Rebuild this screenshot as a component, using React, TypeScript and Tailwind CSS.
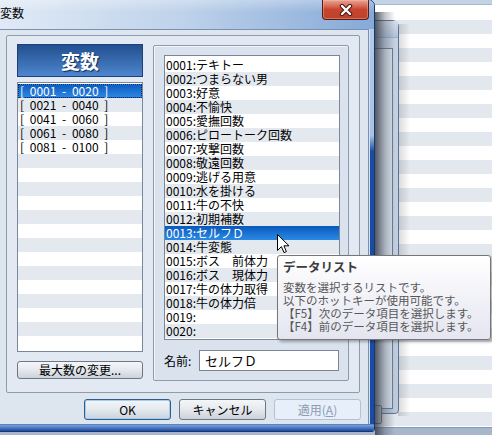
import React from "react";

// 右側リストのデータ
const vars = [
  "テキトー",
  "つまらない男",
  "好意",
  "不愉快",
  "愛撫回数",
  "ピロートーク回数",
  "攻撃回数",
  "敬遠回数",
  "逃げる用意",
  "水を掛ける",
  "牛の不快",
  "初期補数",
  "セルフＤ",
  "牛変態",
  "ボス　前体力",
  "ボス　現体力",
  "牛の体力取得",
  "牛の体力倍",
  "",
  "",
];

const ranges = ["[ 0001 - 0020 ]", "[ 0021 - 0040 ]", "[ 0041 - 0060 ]", "[ 0061 - 0080 ]", "[ 0081 - 0100 ]"];

export default function App() {
  return (
    <div className="relative w-[492px] h-[435px] overflow-hidden bg-white font-['Noto_Sans_CJK_JP',sans-serif] text-[12px] text-black">
      {/* --- 背後のアプリ (縞模様リスト) --- */}
      <div className="absolute inset-0 flex flex-col">
        <div className="h-[5px] bg-[#c3d2e4] border-b border-[#a7b9cf]" />
        <div className="flex-1 overflow-hidden flex flex-col">
          <div className="h-[15px] shrink-0 bg-white" />
          {Array.from({ length: 30 }).map((_, i) => (
            <div key={i} className={i % 2 === 0 ? "h-[14px] shrink-0 bg-[#e3e8ef]" : "h-[14px] shrink-0 bg-white"} />
          ))}
        </div>
        <div className="h-[8px] bg-[#a7b7cb] border-t border-[#8497b0]" />
      </div>

      {/* 背後のウィンドウの影 */}
      <div className="absolute left-[398px] top-[24px] w-[12px] h-[392px] bg-gradient-to-r from-black/15 to-transparent" />

      {/* --- 背後のウィンドウ --- */}
      <div className="absolute left-[300px] top-[20px] w-[99px] h-[394px] rounded-t-[7px] rounded-b-[4px] border border-[#5d7290] bg-gradient-to-b from-[#c4d2e3] to-[#bccadc]">
        <div className="h-[17px] border-b border-[#9fb0c6] bg-gradient-to-b from-[#d3deeb] to-[#b2c3d9]" />
        <div className="absolute left-0 right-[5px] top-[27px] bottom-[4px] border border-[#6b7e98] bg-[#dbe3ed]">
          <div className="absolute left-[60px] top-[356px] w-[20px] h-[19px] border border-[#777e87] rounded-[2px] bg-[#d3d9e1]" />
        </div>
      </div>

      {/* ダイアログの影 */}
      <div className="absolute left-[375px] top-[12px] w-[20px] h-[423px] bg-gradient-to-r from-[#2f3540]/80 via-[#4c5360]/35 to-transparent" />

      {/* --- 変数ダイアログ --- */}
      <div className="absolute left-[-8px] top-[-1px] w-[383px] h-[433px] flex flex-col rounded-t-[7px] rounded-b-[3px] border border-[#17386f] overflow-hidden bg-[#9fbbe1]">
        {/* タイトルバー */}
        <div className="relative h-[29px] shrink-0 bg-gradient-to-r from-[#e2ebf6] via-[#bed2ea] to-[#86a9d8]">
          <div className="absolute inset-x-0 top-0 h-[12px] bg-gradient-to-b from-white/30 to-transparent" />
          <span className="absolute left-[7px] top-[5px] text-[12px] leading-[16px] text-black">変数</span>
          <div className="absolute right-[5px] top-0 w-[47px] h-[20px] rounded-b-[4px] border border-t-0 border-[#5a1c12] bg-gradient-to-b from-[#e8a495] via-[#c9432c] to-[#b8452c] shadow-[inset_0_0_0_1px_rgba(255,200,190,0.35)] flex items-center justify-center">
            <svg width="14" height="12" viewBox="0 0 14 12">
              <path d="M3 2 L11 10 M11 2 L3 10" stroke="#4a160d" strokeWidth="4.4" strokeLinecap="round" />
              <path d="M3 2 L11 10 M11 2 L3 10" stroke="#ffffff" strokeWidth="2.4" strokeLinecap="round" />
            </svg>
          </div>
        </div>

        <div className="flex flex-1">
          {/* 左フレーム */}
          <div className="w-[7px] bg-[#a9c2e3]" />

          {/* クライアント領域 */}
          <div className="w-[369px] flex flex-col border-t border-r border-[#7890b2] bg-[#dde5ef]">
            {/* 外枠 */}
            <div className="mt-[5px] ml-[6px] w-[354px] h-[358px] rounded-[2px] border border-[#8d9bae] bg-[#e2e9f2] flex pl-[10px] pt-[8px]">
              {/* 左カラム */}
              <div className="w-[126px] flex flex-col">
                <div className="h-[33px] border border-[#1d4179] bg-gradient-to-b from-[#22508f] to-[#4e86cf] flex items-center justify-center">
                  <span className="text-white text-[19px] font-bold leading-none [text-shadow:1px_1px_1px_#0b2a5c]">変数</span>
                </div>
                <div className="mt-[5px] h-[270px] border border-[#7a8798] bg-white pt-[1px] overflow-hidden">
                  {Array.from({ length: 19 }).map((_, i) => {
                    const label = ranges[i] ?? "";
                    if (i === 0) {
                      return (
                        <div key={i} className="h-[14px] bg-gradient-to-b from-[#0c5ec2] to-[#2c86e0] border border-dotted border-[#0a2c60] text-white leading-[12px] pl-[1px] whitespace-pre [word-spacing:3px]">
                          {label}
                        </div>
                      );
                    }
                    return (
                      <div key={i} className={i % 2 === 1 ? "h-[14px] bg-[#e4e9ef] leading-[14px] pl-[2px] whitespace-pre [word-spacing:3px]" : "h-[14px] bg-white leading-[14px] pl-[2px] whitespace-pre [word-spacing:3px]"}>
                        {label}
                      </div>
                    );
                  })}
                </div>
                <button className="mt-[9px] h-[18px] rounded-[3px] border border-[#6e7884] bg-gradient-to-b from-[#f4f6f8] via-[#e5e9ee] to-[#cbd2da] text-[12px] leading-[16px] text-black">
                  最大数の変更...
                </button>
              </div>

              {/* 右グループ */}
              <div className="ml-[10px] mt-[1px] w-[196px] h-[336px] rounded-[2px] border border-[#8d9bae] bg-[#d9e2ed] shadow-[inset_1px_1px_0_#f2f6fa] flex flex-col pl-[10px] pt-[9px]">
                <div className="w-[176px] h-[285px] border border-[#7a8798] bg-white pt-[2px] overflow-hidden">
                  {vars.map((name, i) => {
                    const no = String(i + 1).padStart(4, "0");
                    if (i === 12) {
                      return (
                        <div key={i} className="h-[14px] bg-gradient-to-b from-[#0a58bb] to-[#2a8ae6] text-white leading-[14px] pl-[1px] whitespace-pre">
                          {no}:{name}
                        </div>
                      );
                    }
                    return (
                      <div key={i} className={i % 2 === 1 ? "h-[14px] bg-[#e4e9ef] leading-[14px] pl-[1px] whitespace-pre" : "h-[14px] bg-white leading-[14px] pl-[1px] whitespace-pre"}>
                        {no}:{name}
                      </div>
                    );
                  })}
                </div>
                <div className="mt-[10px] flex items-center">
                  <span className="w-[35px] text-[12px] text-black">名前:</span>
                  <div className="w-[140px] h-[21px] border border-[#7a8798] bg-white pl-[5px] text-[13px] leading-[19px]">セルフＤ</div>
                </div>
              </div>
            </div>

            {/* 下部ボタン */}
            <div className="mt-[6px] flex justify-end gap-[8px] pr-[7px]">
              <button className="w-[87px] h-[21px] rounded-[3px] border border-[#2f5b8d] bg-gradient-to-b from-[#f3f6f9] via-[#e4e9ee] to-[#cad2dc] shadow-[inset_0_0_0_1px_#a9cdec] text-[12px] text-black">
                OK
              </button>
              <button className="w-[87px] h-[21px] rounded-[3px] border border-[#6e7884] bg-gradient-to-b from-[#f4f6f8] via-[#e5e9ee] to-[#cbd2da] text-[12px] text-black">
                キャンセル
              </button>
              <button className="w-[87px] h-[21px] rounded-[3px] border border-[#b2c2d6] bg-[#e6effa] text-[12px] text-[#8c9cb1]">
                適用(<span className="underline">A</span>)
              </button>
            </div>
          </div>

          {/* 右フレーム */}
          <div className="w-[5px] bg-[linear-gradient(to_bottom,#b3cae8_0%,#a9c2e4_27%,#1a4ca6_31%,#1a4ca6_100%)] shadow-[inset_1px_0_0_#d4e2f4]" />
        </div>

        {/* 下フレーム */}
        <div className="h-[7px] shrink-0 bg-gradient-to-b from-[#7aa2da] to-[#1a49a2] border-t border-[#5b82bd]" />
      </div>

      {/* --- ツールチップ --- */}
      <div className="absolute left-[277px] top-[255px] w-[214px] h-[85px] rounded-[3px] border border-[#767676] bg-gradient-to-b from-white to-[#e4e5f0] shadow-[2px_2px_3px_rgba(0,0,0,0.3)] pl-[5px] pt-[3px]">
        <div className="text-[12.5px] font-bold leading-[16px] text-[#3c3c3c]">データリスト</div>
        <div className="mt-[6px] text-[11.5px] leading-[13px] text-[#575757] whitespace-pre">
          <div>変数を選択するリストです。</div>
          <div>以下のホットキーが使用可能です。</div>
          <div>【F5】次のデータ項目を選択します。</div>
          <div>【F4】前のデータ項目を選択します。</div>
        </div>
      </div>

      {/* マウスカーソル */}
      <svg className="absolute left-[277px] top-[234px]" width="13" height="20" viewBox="0 0 13 20">
        <path d="M0.5 0.5 V16.5 L4.4 12.6 L7 18.6 L9.4 17.6 L6.9 11.8 H12 Z" fill="#ffffff" stroke="#000000" strokeWidth="1" strokeLinejoin="miter" />
      </svg>
    </div>
  );
}
